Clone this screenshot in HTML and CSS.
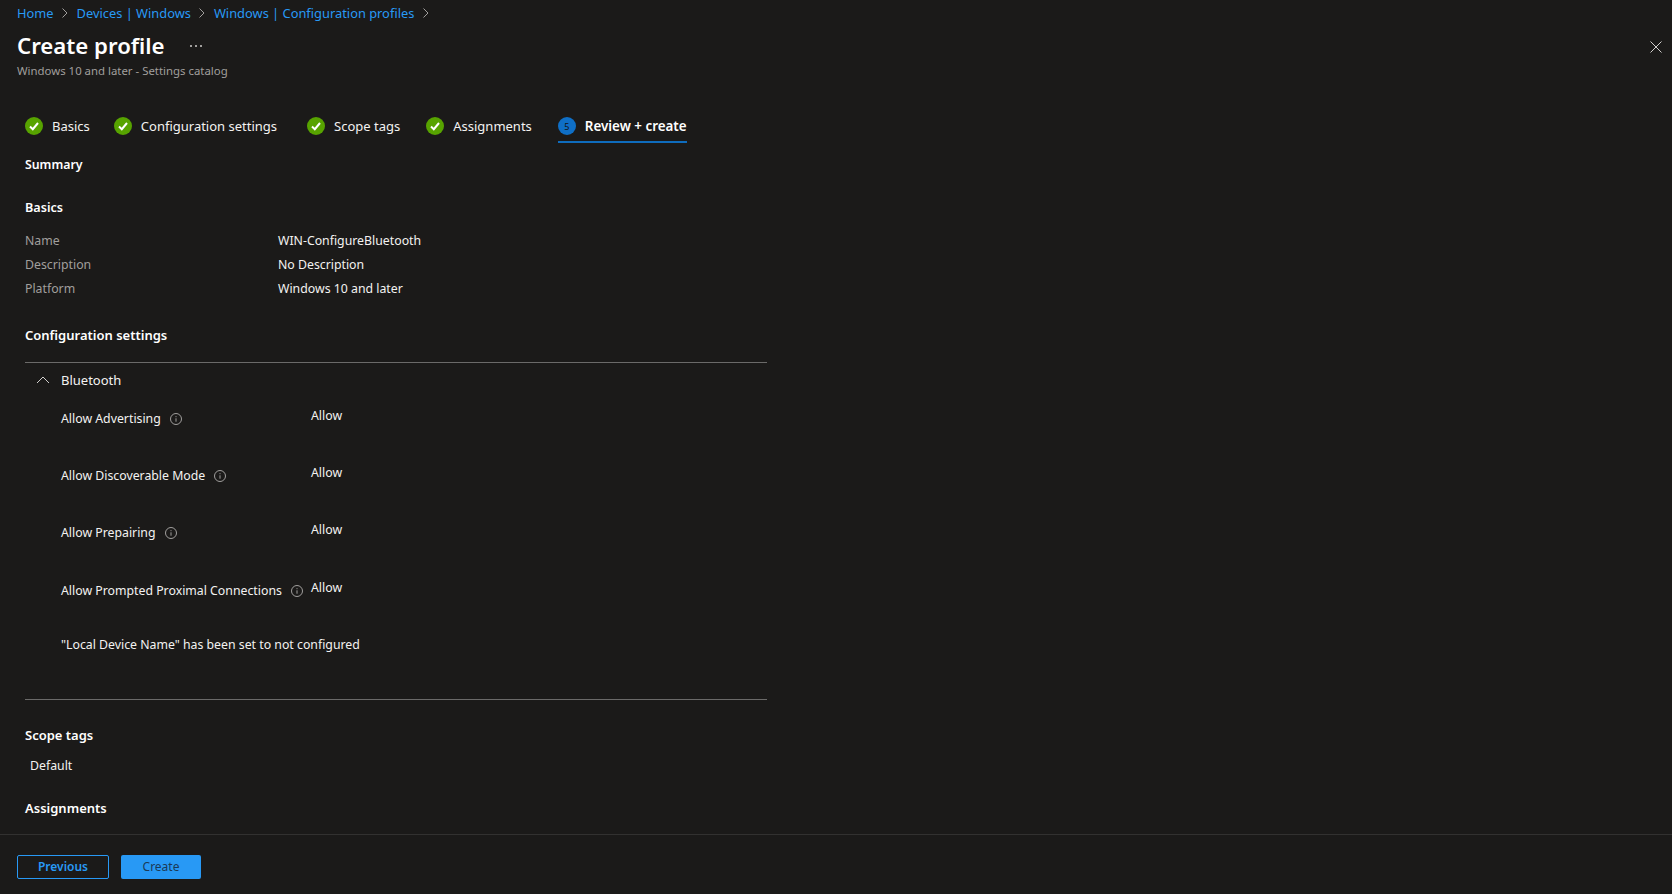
FILE: index.html
```html
<!DOCTYPE html>
<html lang="en">
<head>
<meta charset="utf-8">
<title>Create profile</title>
<link rel="stylesheet" href="styles.css">
</head>
<body>
<div class="app">
  <nav class="crumbs">
    <a>Home</a><svg class="sep" viewBox="0 0 8 12"><path d="M1.5 1.5 6 6l-4.500 4.500"/></svg>
    <a>Devices | Windows</a><svg class="sep" viewBox="0 0 8 12"><path d="M1.5 1.5 6 6l-4.500 4.500"/></svg>
    <a>Windows | Configuration profiles</a><svg class="sep" viewBox="0 0 8 12"><path d="M1.5 1.5 6 6l-4.500 4.500"/></svg>
  </nav>
  <header class="head">
    <div>
      <div class="title-row"><h1>Create profile</h1><svg class="more" viewBox="0 0 12 2"><path d="M0 0h2v2H0zM5 0h2v2H5zM10 0h2v2h-2z"/></svg></div>
      <p class="sub">Windows 10 and later - Settings catalog</p>
    </div>
    <svg class="close" viewBox="0 0 12 12"><path d="M.5.5l11 11M11.500.5l-11 11"/></svg>
  </header>
  <div class="tabs">
    <div class="tab"><svg class="check" viewBox="0 0 18 18"><circle cx="9" cy="9" r="9"/><path d="M5 9.500 7.800 12.200 13 6"/></svg>Basics</div>
    <div class="tab"><svg class="check" viewBox="0 0 18 18"><circle cx="9" cy="9" r="9"/><path d="M5 9.500 7.800 12.200 13 6"/></svg>Configuration settings</div>
    <div class="tab"><svg class="check" viewBox="0 0 18 18"><circle cx="9" cy="9" r="9"/><path d="M5 9.500 7.800 12.200 13 6"/></svg>Scope tags</div>
    <div class="tab"><svg class="check" viewBox="0 0 18 18"><circle cx="9" cy="9" r="9"/><path d="M5 9.500 7.800 12.200 13 6"/></svg>Assignments</div>
    <div class="tab active"><span class="num">5</span>Review + create</div>
  </div>
  <main class="content">
    <h2 class="summary">Summary</h2>
    <h2 class="basics">Basics</h2>
    <dl class="props">
      <dt>Name</dt><dd>WIN-ConfigureBluetooth</dd>
      <dt>Description</dt><dd>No Description</dd>
      <dt>Platform</dt><dd>Windows 10 and later</dd>
    </dl>
    <h2 class="config">Configuration settings</h2>
    <section class="panel">
      <div class="group"><svg class="chev" viewBox="0 0 14 8"><path d="M1 7 7 1l6 6"/></svg>Bluetooth</div>
      <div class="setting"><div class="label">Allow Advertising<svg class="info" viewBox="0 0 12 12"><circle cx="6" cy="6" r="5.500"/><path d="M6 5.300v3.400M6 3.200v1"/></svg></div><div class="value">Allow</div></div>
      <div class="setting"><div class="label">Allow Discoverable Mode<svg class="info" viewBox="0 0 12 12"><circle cx="6" cy="6" r="5.500"/><path d="M6 5.300v3.400M6 3.200v1"/></svg></div><div class="value">Allow</div></div>
      <div class="setting"><div class="label">Allow Prepairing<svg class="info" viewBox="0 0 12 12"><circle cx="6" cy="6" r="5.500"/><path d="M6 5.300v3.400M6 3.200v1"/></svg></div><div class="value">Allow</div></div>
      <div class="setting"><div class="label">Allow Prompted Proximal Connections<svg class="info" viewBox="0 0 12 12"><circle cx="6" cy="6" r="5.500"/><path d="M6 5.300v3.400M6 3.200v1"/></svg></div><div class="value">Allow</div></div>
      <p class="note">"Local Device Name" has been set to not configured</p>
    </section>
    <h2 class="scope">Scope tags</h2>
    <p class="tag">Default</p>
    <h2 class="assign">Assignments</h2>
  </main>
  <footer class="foot">
    <button class="btn ghost">Previous</button>
    <button class="btn primary">Create</button>
  </footer>
</div>
</body>
</html>
```
FILE: styles.css
```css
* { box-sizing: border-box; }
html, body { margin: 0; height: 100%; }
body {
  background: #1b1a19;
  color: #fff;
  font-family: "Noto Sans", "Open Sans", "Liberation Sans", sans-serif;
  font-size: 12.3px;
  overflow: hidden;
}
.app { height: 894px; display: flex; flex-direction: column; }
.crumbs {
  display: flex;
  align-items: center;
  height: 26px;
  padding-left: 17px;
  font-size: 12.85px;
  color: #2899f5;
}
.sep { width: 8px; height: 12px; margin: 0 7.5px 0 7.5px; fill: none; stroke: #a19f9d; stroke-width: 1; }
.head {
  display: flex;
  justify-content: space-between;
  padding: 4px 0 0 17px;
  height: 81px;
}
.title-row { display: flex; align-items: center; height: 32px; }
h1 { margin: 0; font-size: 22.2px; font-weight: 600; line-height: 32px; }
.more { width: 12px; height: 2px; margin-left: 25px; fill: #a19f9d; }
.sub { margin: 1px 0 0; font-size: 11.4px; color: #a19f9d; line-height: 16px; }
.close { width: 12px; height: 12px; margin: 11px 10px 0 0; fill: none; stroke: #d2d0ce; stroke-width: 1; }
.tabs { display: flex; height: 48px; padding: 8px 0 0 25px; gap: 26px; align-items: flex-start; }
.tab {
  display: flex;
  align-items: center;
  height: 28px;
  gap: 9px;
  padding-bottom: 6px;
  font-size: 13px;
  color: #f3f2f1;
}
.tab:nth-child(2) { margin-left: -2px; }
.tab:nth-child(3) { margin-left: 4px; }
.tab.active { font-size: 13.4px; font-weight: 600; color: #fff; border-bottom: 2px solid #0f6cbd; padding-bottom: 4px; }
.check { width: 18px; height: 18px; flex: none; }
.check circle { fill: #57a300; }
.check path { fill: none; stroke: #fff; stroke-width: 2; }
.num {
  width: 18px; height: 18px; border-radius: 50%;
  background: #0f6fc6; color: #111;
  font-size: 9px; font-weight: 400;
  display: flex; align-items: center; justify-content: center;
}
.content { flex: 1; min-height: 0; overflow: hidden; padding-left: 25px; }
h2 { margin: 0; font-size: 13px; font-weight: 600; line-height: 20px; }
.summary { font-size: 12.3px; }
.basics { margin-top: 23px; font-size: 12.6px; }
.props {
  display: grid;
  grid-template-columns: 253px 1fr;
  grid-auto-rows: 24px;
  margin: 10px 0 0;
  align-items: center;
}
.props dt { color: #a19f9d; }
.props dd { margin: 0; color: #f3f2f1; }
.config { margin-top: 25px; }
.panel {
  width: 742px;
  margin-top: 17px;
  height: 338px;
  border-top: 1px solid #6b6a69;
  border-bottom: 1px solid #6b6a69;
  padding-left: 11px;
}
.group { display: flex; align-items: center; height: 33px; margin-bottom: 10px; gap: 11px; font-size: 13px; color: #f3f2f1; }
.chev { width: 14px; height: 8px; fill: none; stroke: #d2d0ce; stroke-width: 1; }
.setting { display: flex; height: 57.2px; margin-left: 25px; align-items: flex-start; }
.label { width: 250px; display: flex; align-items: center; gap: 9px; margin-top: 3px; line-height: 20px; color: #f3f2f1; white-space: nowrap; }
.value { line-height: 20px; color: #f3f2f1; }
.info { width: 12px; height: 12px; fill: none; stroke: #a19f9d; stroke-width: 1; flex: none; }
.note { margin: 0 0 0 25px; line-height: 20px; color: #f3f2f1; }
.scope { margin-top: 25px; }
.tag { margin: 11px 0 0 5px; line-height: 20px; color: #f3f2f1; }
.assign { margin-top: 22px; }
.foot {
  flex: none;
  height: 60px;
  border-top: 1px solid #323130;
  padding: 20px 0 0 17px;
  display: flex;
  gap: 12px;
  align-items: flex-start;
}
.btn { height: 24px; border-radius: 2px; font: 600 12px "Noto Sans", sans-serif; padding: 0 0 2px; }
.ghost { width: 92px; background: transparent; border: 1px solid #2899f5; color: #2899f5; }
.primary { width: 80px; background: #2899f5; border: 0; color: #1b3a57; font-weight: 400; }
```
